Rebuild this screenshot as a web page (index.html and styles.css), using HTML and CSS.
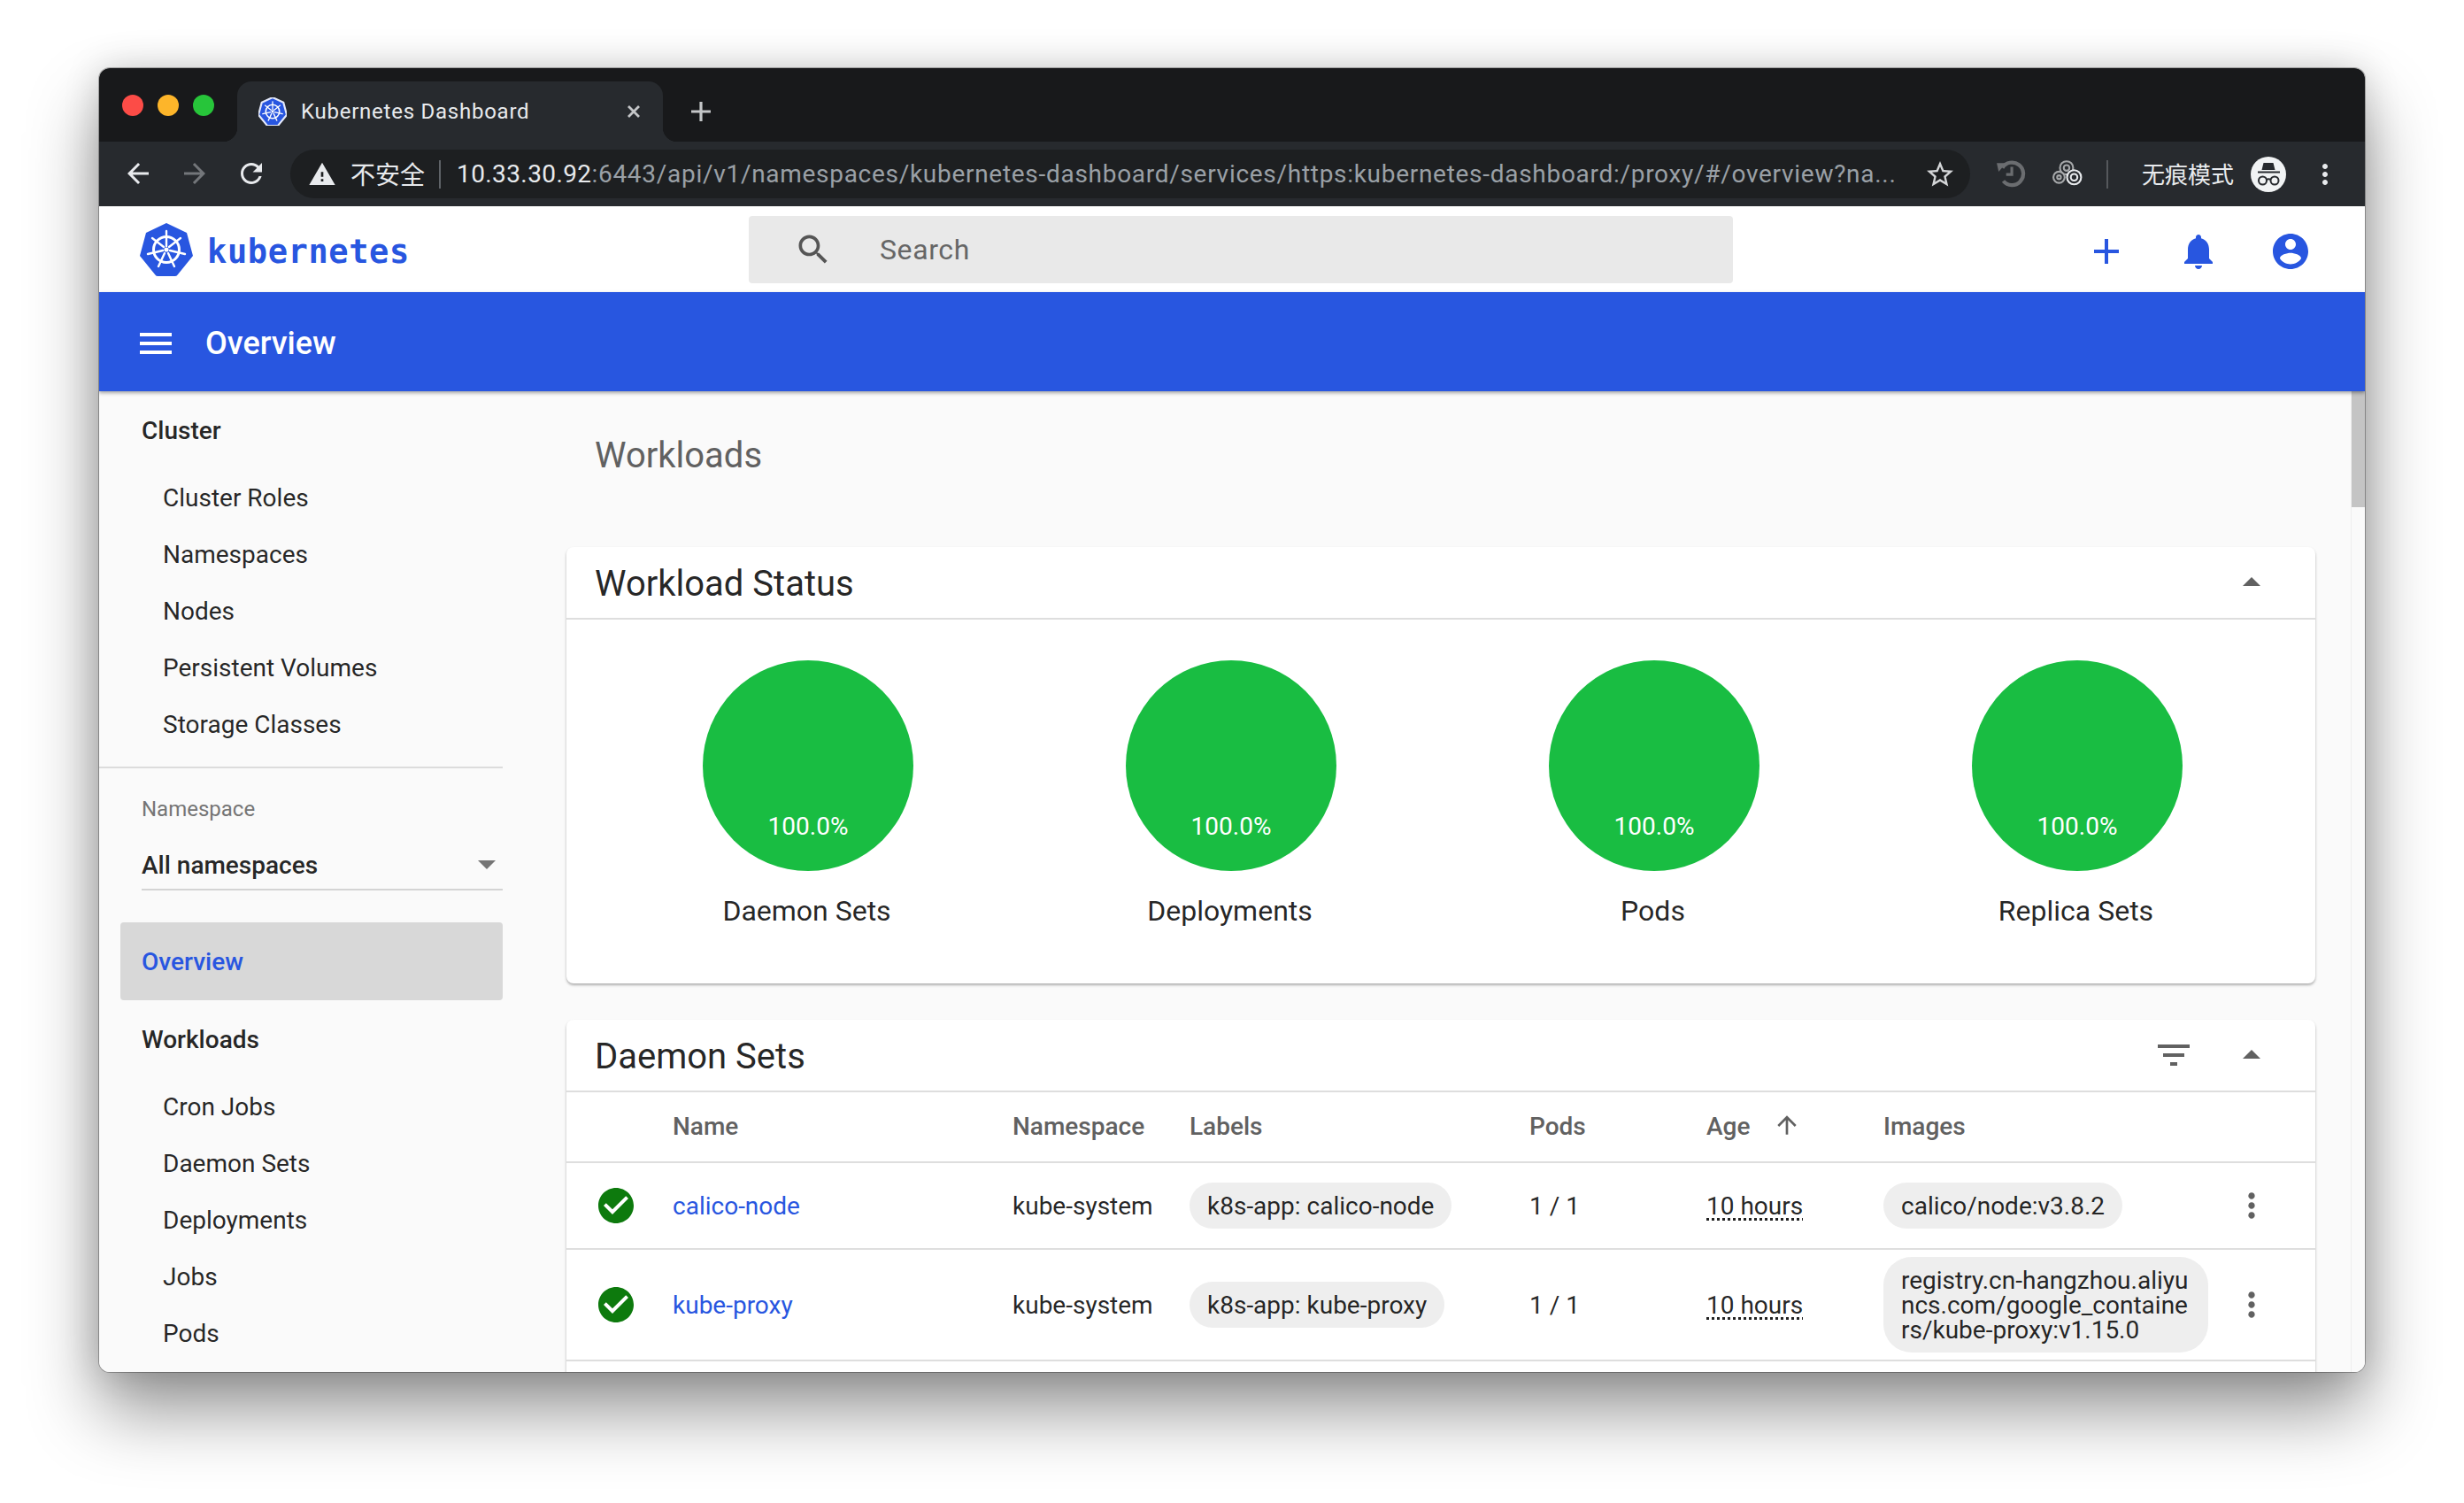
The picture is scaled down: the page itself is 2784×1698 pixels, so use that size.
FILE: index.html
```html
<!DOCTYPE html>
<html lang="en">
<head>
    <meta charset="UTF-8">
    <meta name="viewport" content="width=device-width, initial-scale=1.0">
    <title>Kubernetes Dashboard</title>
    <link rel="stylesheet" href="styles.css">
</head>
<body>

    <svg class="defs" width="0" height="0">
        <symbol id="helm" viewBox="0 0 60 60">
            <path d="M30 0 L53 11 L60 37 L43 58 Q42 60 40 60 L20 60 Q18 60 17 58 L0 37 L7 11 Z" fill="#2856e0"/>
            <g fill="none" stroke="#fff" stroke-linecap="round">
                <circle cx="30" cy="30" r="14.5" stroke-width="3"/>
                <g stroke-width="2.4">
                    <path d="M30 9 V26"/>
                    <path d="M46 17 L33 27"/>
                    <path d="M51 35 L34 31"/>
                    <path d="M39 49 L32 34"/>
                    <path d="M21 49 L28 34"/>
                    <path d="M9 35 L26 31"/>
                    <path d="M14 17 L27 27"/>
                </g>
            </g>
            <circle cx="30" cy="30" r="2.6" fill="#fff" stroke="none"/>
        </symbol>
        <symbol id="drop-up" viewBox="0 0 24 24"><path d="M7 14l5-5 5 5z"/></symbol>
        <symbol id="more" viewBox="0 0 24 24"><path d="M12 8c1.1 0 2-.9 2-2s-.9-2-2-2-2 .9-2 2 .9 2 2 2zm0 2c-1.1 0-2 .9-2 2s.9 2 2 2 2-.9 2-2-.9-2-2-2zm0 6c-1.1 0-2 .9-2 2s.9 2 2 2 2-.9 2-2-.9-2-2-2z"/></symbol>
        <symbol id="check" viewBox="2 2 20 20"><path d="M12 2C6.48 2 2 6.48 2 12s4.48 10 10 10 10-4.48 10-10S17.52 2 12 2zm-2 15l-5-5 1.41-1.41L10 14.17l7.59-7.59L19 8l-9 9z"/></symbol>
    </svg>

    <div class="window">

        <!-- Browser tabs -->
        <div class="tabstrip">
            <div class="lights">
                <span class="light light-red"></span>
                <span class="light light-amber"></span>
                <span class="light light-green"></span>
            </div>
            <div class="tab">
                <svg class="favicon"><use href="#helm"/></svg>
                <span class="tab-title">Kubernetes Dashboard</span>
                <svg class="tab-close" viewBox="0 0 16 16"><path d="M2 2 L14 14 M14 2 L2 14"/></svg>
            </div>
            <svg class="new-tab" viewBox="0 0 24 24"><path d="M12 1 V23 M1 12 H23"/></svg>
        </div>

        <!-- Browser toolbar -->
        <div class="toolbar">
            <div class="tool"><svg class="tool-icon" viewBox="0 0 24 24"><path d="M20 11H7.83l5.59-5.59L12 4l-8 8 8 8 1.41-1.41L7.83 13H20v-2z"/></svg></div>
            <div class="tool"><svg class="tool-icon tool-off" viewBox="0 0 24 24"><path d="M12 4l-1.41 1.41L16.17 11H4v2h12.17l-5.58 5.59L12 20l8-8z"/></svg></div>
            <div class="tool"><svg class="tool-icon" viewBox="0 0 24 24"><path d="M17.65 6.35C16.2 4.9 14.21 4 12 4c-4.42 0-7.99 3.58-7.99 8s3.57 8 7.99 8c3.73 0 6.84-2.55 7.73-6h-2.08c-.82 2.33-3.04 4-5.65 4-3.31 0-6-2.69-6-6s2.69-6 6-6c1.66 0 3.14.69 4.22 1.78L13 11h7V4l-2.35 2.35z"/></svg></div>

            <div class="address">
                <svg class="warn-icon" viewBox="0 0 24 24"><path d="M1 21h22L12 2 1 21zm12-3h-2v-2h2v2zm0-4h-2v-4h2v4z"/></svg>
                <span class="insecure">不安全</span>
                <span class="address-rule"></span>
                <span class="url"><span class="url-host">10.33.30.92</span>:6443/api/v1/namespaces/kubernetes-dashboard/services/https:kubernetes-dashboard:/proxy/#/overview?na...</span>
                <svg class="star-icon" viewBox="0 0 24 24"><path d="M22 9.24l-7.19-.62L12 2 9.19 8.63 2 9.24l5.46 4.73L5.82 21 12 17.27 18.18 21l-1.63-7.03L22 9.24zM12 15.4l-3.76 2.27 1-4.28-3.32-2.88 4.38-.38L12 6.1l1.71 4.03 4.38.38-3.32 2.88 1 4.28L12 15.4z"/></svg>
            </div>

            <div class="tool tool-first">
                <svg class="ext-icon" viewBox="0 0 32 32" fill="none" stroke="#6b6d70" stroke-width="4">
                    <path d="M7 10 A12 12 0 1 1 8 24"/>
                    <path d="M1 5 L11 5 L3 14 Z" fill="#6b6d70" stroke="none"/>
                    <path d="M17 9 V17 H11" stroke-width="3"/>
                </svg>
            </div>
            <div class="tool">
                <svg class="ext-icon" viewBox="0 0 32 32" fill="none" stroke-width="2">
                    <circle cx="7" cy="20" r="6" stroke="#a5a7a9"/>
                    <circle cx="7" cy="20" r="2" stroke="#a5a7a9"/>
                    <circle cx="15" cy="10" r="7" stroke="#a5a7a9"/>
                    <circle cx="15" cy="10" r="3" stroke="#a5a7a9"/>
                    <circle cx="23" cy="20" r="7.5" stroke="#e8eaed" fill="#272a2e"/>
                    <circle cx="23" cy="20" r="3.5" stroke="#e8eaed"/>
                </svg>
            </div>
            <span class="toolbar-rule"></span>
            <span class="incognito-label">无痕模式</span>
            <div class="incognito">
                <svg viewBox="0 0 40 40">
                    <circle cx="20" cy="20" r="20" fill="#f1f3f4"/>
                    <path d="M14.5 7 H25.5 L27.5 15 H12.5 Z M8 16.5 H33 V18.5 H8 Z" fill="#272a2e"/>
                    <g fill="none" stroke="#272a2e" stroke-width="2">
                        <circle cx="13.5" cy="27" r="4.5"/>
                        <circle cx="27" cy="27" r="4.5"/>
                        <path d="M18 26 Q20.2 24.5 22.5 26"/>
                    </g>
                </svg>
            </div>
            <svg class="tool-icon chrome-menu" viewBox="0 0 24 24"><use href="#more"/></svg>
        </div>

        <!-- Dashboard top bar -->
        <div class="app-header">
            <div class="brand">
                <svg class="brand-logo"><use href="#helm"/></svg>
                <span class="brand-name">kubernetes</span>
            </div>
            <div class="search">
                <svg class="search-icon" viewBox="0 0 24 24"><path d="M15.5 14h-.79l-.28-.27C15.41 12.59 16 11.11 16 9.5 16 5.91 13.09 3 9.5 3S3 5.91 3 9.5 5.91 16 9.5 16c1.61 0 3.09-.59 4.23-1.57l.27.28v.79l5 4.99L20.49 19l-4.99-5zm-6 0C7.01 14 5 11.99 5 9.5S7.01 5 9.5 5 14 7.01 14 9.5 11.99 14 9.5 14z"/></svg>
                <span class="search-text">Search</span>
            </div>
            <div class="actions">
                <div class="action"><svg viewBox="0 0 24 24"><path d="M19 13h-6v6h-2v-6H5v-2h6V5h2v6h6v2z"/></svg></div>
                <div class="action"><svg viewBox="0 0 24 24"><path d="M12 22c1.1 0 2-.9 2-2h-4c0 1.1.89 2 2 2zm6-6v-5c0-3.07-1.64-5.64-4.5-6.32V4c0-.83-.67-1.5-1.5-1.5s-1.5.67-1.5 1.5v.68C7.63 5.36 6 7.92 6 11v5l-2 2v1h16v-1l-2-2z"/></svg></div>
                <div class="action"><svg viewBox="0 0 24 24"><path d="M12 2C6.48 2 2 6.48 2 12s4.48 10 10 10 10-4.48 10-10S17.52 2 12 2zm0 3c1.66 0 3 1.34 3 3s-1.34 3-3 3-3-1.34-3-3 1.34-3 3-3zm0 14.2c-2.5 0-4.71-1.28-6-3.22.03-1.99 4-3.08 6-3.08 1.99 0 5.97 1.09 6 3.08-1.29 1.94-3.5 3.22-6 3.22z"/></svg></div>
            </div>
        </div>

        <div class="page-bar">
            <svg class="page-menu" viewBox="3 6 18 12"><path d="M3 18h18v-2H3v2zm0-5h18v-2H3v2zm0-7v2h18V6H3z"/></svg>
            <span class="page-title">Overview</span>
        </div>

        <div class="content">

            <!-- Sidebar -->
            <div class="sidebar">
                <div class="nav-heading">Cluster</div>
                <div class="nav-item">Cluster Roles</div>
                <div class="nav-item">Namespaces</div>
                <div class="nav-item">Nodes</div>
                <div class="nav-item">Persistent Volumes</div>
                <div class="nav-item">Storage Classes</div>
                <div class="nav-rule"></div>
                <div class="ns-label">Namespace</div>
                <div class="ns-select">
                    <span>All namespaces</span>
                    <span class="ns-arrow"></span>
                </div>
                <div class="nav-active">Overview</div>
                <div class="nav-heading">Workloads</div>
                <div class="nav-item">Cron Jobs</div>
                <div class="nav-item">Daemon Sets</div>
                <div class="nav-item">Deployments</div>
                <div class="nav-item">Jobs</div>
                <div class="nav-item">Pods</div>
            </div>

            <!-- Main -->
            <div class="main">
                <div class="main-heading">Workloads</div>

                <div class="card">
                    <div class="card-header">
                        <span class="card-title">Workload Status</span>
                        <svg class="card-toggle"><use href="#drop-up"/></svg>
                    </div>
                    <div class="status-grid">
                        <div class="status-item">
                            <div class="status-circle">100.0%</div>
                            <div class="status-label">Daemon Sets</div>
                        </div>
                        <div class="status-item">
                            <div class="status-circle">100.0%</div>
                            <div class="status-label">Deployments</div>
                        </div>
                        <div class="status-item">
                            <div class="status-circle">100.0%</div>
                            <div class="status-label">Pods</div>
                        </div>
                        <div class="status-item">
                            <div class="status-circle">100.0%</div>
                            <div class="status-label">Replica Sets</div>
                        </div>
                    </div>
                </div>

                <div class="card">
                    <div class="card-header">
                        <span class="card-title">Daemon Sets</span>
                        <svg class="card-filter" viewBox="3 6 18 12"><path d="M10 18h4v-2h-4v2zM3 6v2h18V6H3zm3 7h12v-2H6v2z"/></svg>
                        <svg class="card-toggle"><use href="#drop-up"/></svg>
                    </div>

                    <div class="table-row table-head">
                        <span></span>
                        <span>Name</span>
                        <span>Namespace</span>
                        <span>Labels</span>
                        <span class="cell-pods">Pods</span>
                        <span class="age-head">Age <svg class="sort-icon" viewBox="0 0 24 24"><path d="M4 12l1.41 1.41L11 7.83V20h2V7.83l5.58 5.59L20 12l-8-8-8 8z"/></svg></span>
                        <span>Images</span>
                        <span></span>
                    </div>

                    <div class="table-row row-one">
                        <svg class="ok-icon"><use href="#check"/></svg>
                        <a class="row-link cell">calico-node</a>
                        <span class="cell">kube-system</span>
                        <span><span class="chip">k8s-app: calico-node</span></span>
                        <span class="cell cell-pods">1 / 1</span>
                        <span class="cell"><span class="age">10 hours</span></span>
                        <span><span class="chip">calico/node:v3.8.2</span></span>
                        <svg class="row-more"><use href="#more"/></svg>
                    </div>

                    <div class="table-row row-two">
                        <svg class="ok-icon"><use href="#check"/></svg>
                        <a class="row-link cell">kube-proxy</a>
                        <span class="cell">kube-system</span>
                        <span><span class="chip">k8s-app: kube-proxy</span></span>
                        <span class="cell cell-pods">1 / 1</span>
                        <span class="cell"><span class="age">10 hours</span></span>
                        <span><span class="chip chip-wrap">registry.cn-hangzhou.aliyuncs.com/google_containers/kube-proxy:v1.15.0</span></span>
                        <svg class="row-more"><use href="#more"/></svg>
                    </div>

                    <div class="row-more-space"></div>
                </div>
            </div>

            <div class="scrollbar"><div class="scroll-thumb"></div></div>
        </div>
    </div>

</body>
</html>
```

FILE: styles.css
```css
* {
    box-sizing: border-box;
}
html, body {
    margin: 0;
    height: 1698px;
    overflow: hidden;
    background-color: #fff;
    font-family: Roboto, "Noto Sans CJK SC", sans-serif;
}
.defs {
    display: block;
}
svg {
    display: block;
}
.window {
    position: relative;
    width: 2560px;
    height: 1473px;
    margin: 77px 0 0 112px;
    display: flex;
    flex-direction: column;
    border-radius: 12px;
    overflow: hidden;
    background-color: #fafafa;
}
body::before {
    content: "";
    position: absolute;
    left: 112px;
    top: 77px;
    width: 2560px;
    height: 1473px;
    border-radius: 12px;
    box-shadow: 0 0 0 1px rgba(0, 0, 0, 0.28), 0 44px 80px rgba(0, 0, 0, 0.42), 0 0 40px rgba(0, 0, 0, 0.16);
}

/* browser tabs */
.tabstrip {
    height: 83px;
    flex: none;
    display: flex;
    align-items: flex-end;
    background-color: #18191b;
}
.lights {
    display: flex;
    gap: 16px;
    padding: 0 0 29px 26px;
    width: 156px;
    align-self: flex-end;
}
.light {
    width: 24px;
    height: 24px;
    flex: none;
    border-radius: 50%;
}
.light-red { background-color: #fc4c47; }
.light-amber { background-color: #fdb52a; }
.light-green { background-color: #27c53a; }
.tab {
    position: relative;
    width: 481px;
    height: 68px;
    display: flex;
    align-items: center;
    padding: 0 24px;
    border-radius: 16px 16px 0 0;
    background-color: #272a2e;
}
.tab::before,
.tab::after {
    content: "";
    position: absolute;
    bottom: 0;
    width: 16px;
    height: 16px;
}
.tab::before {
    left: -16px;
    background: radial-gradient(circle at 0 0, #18191b 16px, #272a2e 16.5px);
}
.tab::after {
    right: -16px;
    background: radial-gradient(circle at 100% 0, #18191b 16px, #272a2e 16.5px);
}
.favicon {
    width: 32px;
    height: 32px;
    flex: none;
    stroke: #e4e9fa;
    stroke-width: 4;
}
.tab-title {
    margin-left: 16px;
    font-size: 24px;
    letter-spacing: 0.75px;
    color: #e8eaed;
    white-space: nowrap;
}
.tab-close {
    width: 16px;
    height: 16px;
    margin-left: auto;
    margin-right: 1px;
    stroke: #c4c6c8;
    stroke-width: 2.8;
}
.new-tab {
    width: 24px;
    height: 24px;
    margin: 0 0 22px 31px;
    stroke: #c4c6c8;
    stroke-width: 3.2;
}

/* browser toolbar */
.toolbar {
    height: 73px;
    flex: none;
    display: flex;
    align-items: center;
    padding-left: 12px;
    background-color: #272a2e;
}
.tool {
    width: 64px;
    height: 64px;
    margin-bottom: 1px;
    flex: none;
    display: flex;
    align-items: center;
    justify-content: center;
}
.tool-first {
    margin-left: 14px;
}
.tool-icon {
    width: 36px;
    height: 36px;
    fill: #e8eaed;
}
.tool-off {
    fill: #73767a;
}
.ext-icon {
    width: 34px;
    height: 34px;
}
.address {
    width: 1898px;
    height: 55px;
    margin-left: 12px;
    flex: none;
    display: flex;
    align-items: center;
    padding-left: 20px;
    border-radius: 28px;
    background-color: #1d1f21;
}
.warn-icon {
    width: 32px;
    height: 32px;
    flex: none;
    fill: #e8eaed;
}
.insecure {
    margin: 0 0 2px 16px;
    font-size: 28px;
    color: #e8eaed;
    white-space: nowrap;
}
.address-rule {
    width: 2px;
    height: 32px;
    margin-left: 16px;
    flex: none;
    background-color: #5f6368;
}
.url {
    margin-left: 18px;
    font-size: 28px;
    letter-spacing: 0.71px;
    color: #9aa0a6;
    white-space: nowrap;
}
.url-host {
    color: #e8eaed;
    letter-spacing: 0.4px;
}
.star-icon {
    width: 36px;
    height: 36px;
    flex: none;
    margin-left: auto;
    margin-right: 16px;
    fill: #d4d6d8;
}
.toolbar-rule {
    width: 2px;
    height: 32px;
    margin-left: 12px;
    flex: none;
    background-color: #55585c;
}
.incognito-label {
    margin: 0 0 2px 38px;
    font-size: 26px;
    color: #e8eaed;
    white-space: nowrap;
}
.incognito {
    width: 40px;
    height: 40px;
    margin-left: 19px;
    flex: none;
}
.chrome-menu {
    margin-left: 26px;
}

/* dashboard top bar */
.app-header {
    height: 97px;
    flex: none;
    display: flex;
    align-items: center;
    background-color: #fff;
}
.brand {
    width: 734px;
    flex: none;
    display: flex;
    align-items: center;
    padding-left: 46px;
}
.brand-logo {
    width: 60px;
    height: 60px;
    flex: none;
}
.brand-name {
    margin-left: 16px;
    padding-top: 5px;
    font-family: "DejaVu Sans Mono", monospace;
    font-size: 37px;
    font-weight: 700;
    letter-spacing: 0.6px;
    color: #2856e0;
}
.search {
    width: 1112px;
    height: 76px;
    flex: none;
    display: flex;
    align-items: center;
    padding-left: 51px;
    border-radius: 4px;
    background-color: #e9e9e9;
}
.search-icon {
    width: 44px;
    height: 44px;
    flex: none;
    fill: #555;
}
.search-text {
    margin-left: 53px;
    padding-top: 1px;
    font-size: 32px;
    letter-spacing: 0.6px;
    color: #666;
}
.actions {
    margin-left: auto;
    padding: 4px 32px 0 0;
    display: flex;
}
.action {
    width: 104px;
    display: flex;
    justify-content: center;
}
.action svg {
    width: 48px;
    height: 48px;
    fill: #2856e0;
}
.page-bar {
    position: relative;
    z-index: 1;
    height: 112px;
    flex: none;
    display: flex;
    align-items: center;
    padding-left: 46px;
    background-color: #2856e0;
    box-shadow: 0 2px 4px rgba(0, 0, 0, 0.35);
}
.page-menu {
    width: 36px;
    height: 24px;
    margin-top: 4px;
    flex: none;
    fill: #fff;
}
.page-title {
    margin-left: 38px;
    padding-top: 3px;
    font-size: 36px;
    font-weight: 500;
    color: #fff;
}

/* sidebar and main */
.content {
    flex: 1;
    min-height: 0;
    display: flex;
}
.sidebar {
    width: 456px;
    flex: none;
    padding-top: 12px;
    overflow: hidden;
    font-size: 28px;
    color: rgba(0, 0, 0, 0.87);
}
.nav-heading {
    height: 64px;
    margin-bottom: 12px;
    padding: 1px 0 0 48px;
    line-height: 64px;
    font-weight: 500;
}
.nav-item {
    height: 64px;
    padding: 1px 0 0 72px;
    line-height: 64px;
}
.nav-rule {
    height: 2px;
    margin-top: 16px;
    background-color: #dcdcdc;
}
.ns-label {
    margin-top: 30px;
    padding-left: 48px;
    font-size: 24px;
    line-height: 32px;
    color: #757575;
}
.ns-select {
    height: 58px;
    margin: 18px 0 0 48px;
    display: flex;
    align-items: center;
    justify-content: space-between;
    padding: 2px 8px 0 0;
    border-bottom: 2px solid #d4d4d4;
    font-weight: 500;
}
.ns-arrow {
    width: 0;
    height: 0;
    border-left: 10px solid transparent;
    border-right: 10px solid transparent;
    border-top: 10px solid #757575;
}
.nav-active {
    height: 88px;
    margin: 36px 0 12px 24px;
    padding-left: 24px;
    line-height: 89px;
    font-weight: 500;
    color: #2856e0;
    border-radius: 4px;
    background-color: #d8d8d8;
}
.main {
    flex: 1;
    min-width: 0;
    padding: 0 40px 0 72px;
    overflow: hidden;
}
.main-heading {
    height: 144px;
    margin-bottom: 32px;
    padding-left: 32px;
    line-height: 146px;
    font-size: 40px;
    color: #616161;
}
.card {
    margin-bottom: 41px;
    border-radius: 8px;
    background-color: #fff;
    box-shadow: 0 2px 3px rgba(0, 0, 0, 0.3);
}
.card-header {
    height: 82px;
    display: flex;
    align-items: center;
    padding: 0 32px;
    border-bottom: 2px solid #dedede;
}
.card-title {
    margin-top: 2px;
    font-size: 40px;
    color: rgba(0, 0, 0, 0.87);
}
.card-filter {
    width: 36px;
    height: 24px;
    margin-left: auto;
    fill: #616161;
}
.card-toggle {
    width: 48px;
    height: 48px;
    margin-left: auto;
    margin-right: 16px;
    fill: #616161;
}
.card-filter + .card-toggle {
    margin-left: 46px;
}
.status-grid {
    display: grid;
    grid-template-columns: repeat(4, 478px);
    padding: 46px 30px 0 34px;
    height: 411px;
}
.status-item {
    display: flex;
    flex-direction: column;
    align-items: center;
}
.status-circle {
    width: 238px;
    height: 238px;
    display: flex;
    align-items: flex-end;
    justify-content: center;
    padding-bottom: 34px;
    border-radius: 50%;
    line-height: 32px;
    font-size: 28px;
    color: #fff;
    background-color: #19bd42;
}
.status-label {
    margin: 25px 3px 0 0;
    line-height: 40px;
    font-size: 32px;
    color: rgba(0, 0, 0, 0.87);
}

/* table */
.table-row {
    display: grid;
    grid-template-columns: 84px 384px 200px 385px 199px 200px 380px 72px;
    align-items: center;
    padding: 0 36px;
    border-bottom: 2px solid #dedede;
    font-size: 28px;
    color: rgba(0, 0, 0, 0.87);
}
.table-head {
    height: 80px;
    padding-bottom: 2px;
    font-weight: 500;
    color: #616161;
}
.row-one {
    height: 98px;
}
.row-two {
    height: 126px;
}
.row-more-space {
    height: 98px;
}
.cell {
    padding-top: 1px;
}
.cell-pods {
    margin-left: -1px;
}
.age-head {
    display: flex;
    align-items: center;
}
.sort-icon {
    width: 32px;
    height: 32px;
    margin: 0 0 2px 26px;
    fill: #616161;
}
.ok-icon {
    width: 40px;
    height: 40px;
    fill: #0d7a0d;
}
.row-link {
    color: #2856e0;
}
.chip {
    display: inline-block;
    padding: 0 20px;
    height: 52px;
    line-height: 54px;
    border-radius: 26px;
    background-color: #eee;
    white-space: nowrap;
}
.chip-wrap {
    width: 367px;
    height: 108px;
    padding: 13px 20px;
    line-height: 28px;
    border-radius: 32px;
    white-space: normal;
    word-break: break-all;
}
.age {
    text-decoration: underline dotted;
    text-underline-offset: 4px;
}
.row-more {
    width: 44px;
    height: 44px;
    justify-self: center;
    fill: #616161;
}
.scrollbar {
    width: 16px;
    flex: none;
    background-color: #fafafa;
    border-left: 1px solid #efefef;
}
.scroll-thumb {
    height: 131px;
    background-color: #c4c4c4;
}
```
